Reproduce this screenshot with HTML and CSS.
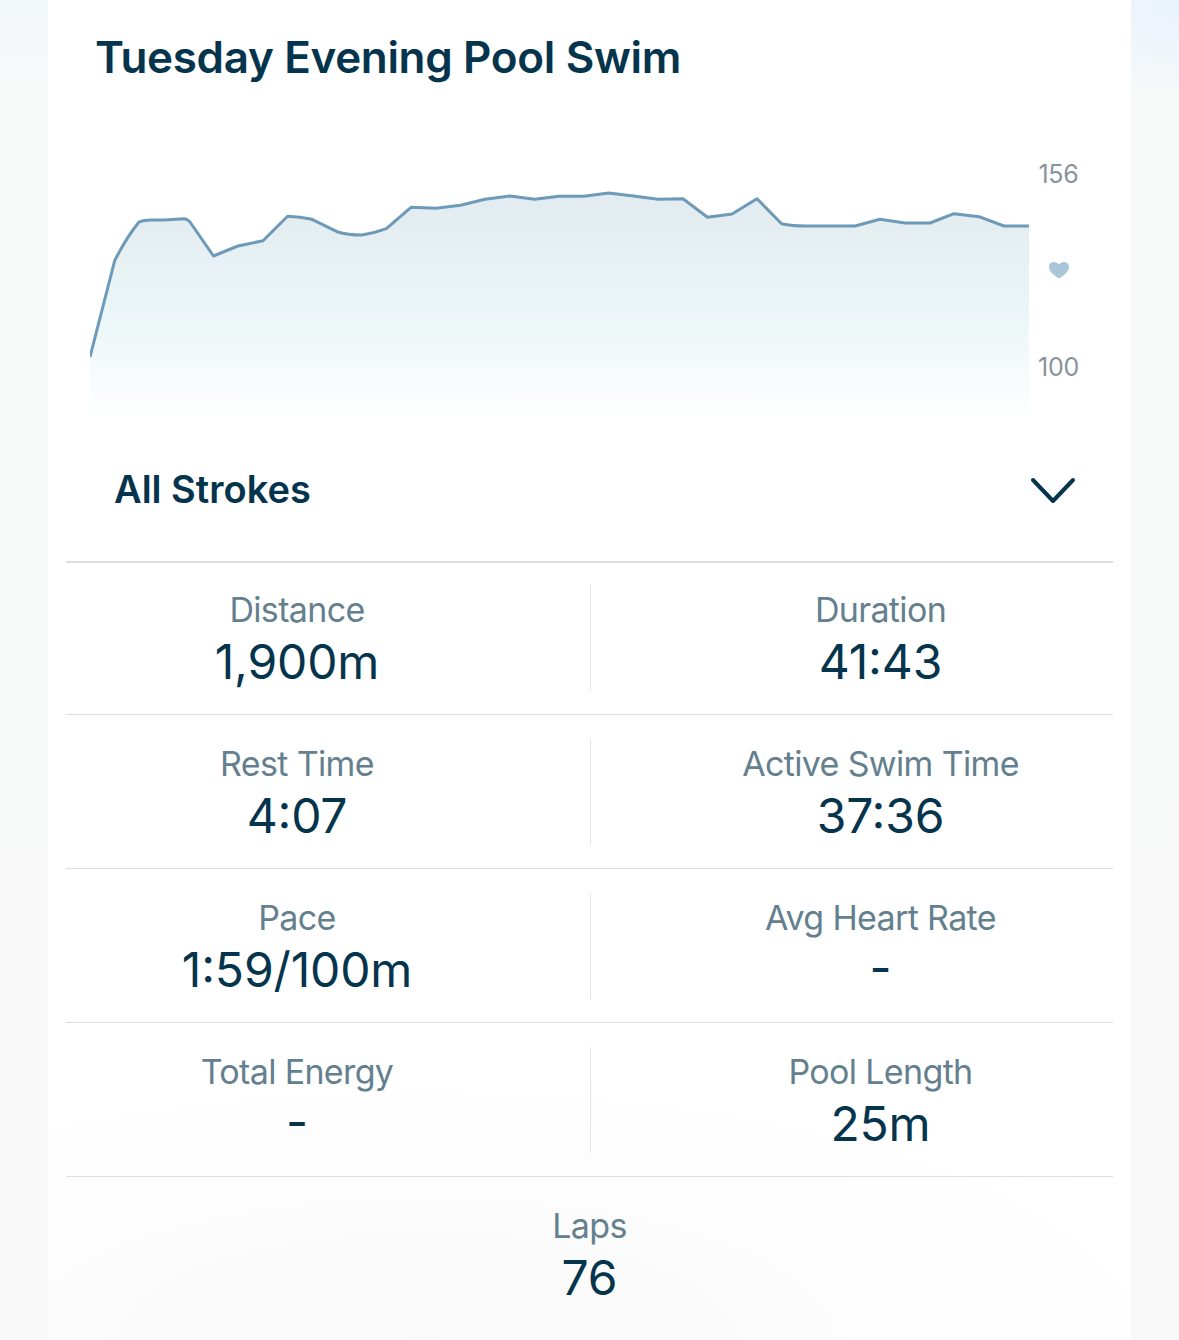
FILE: index.html
```html
<!DOCTYPE html>
<html lang="en">
<head>
<meta charset="utf-8">
<title>Tuesday Evening Pool Swim</title>
<link rel="stylesheet" href="styles.css">
</head>
<body>
<main class="card">
  <h1 class="title">Tuesday Evening Pool Swim</h1>
  <section class="chart">
    <svg class="plot" viewBox="0 0 939 270" width="939" height="270" aria-hidden="true">
      <defs>
        <linearGradient id="area" x1="0" y1="0" x2="0" y2="1">
          <stop offset="0" stop-color="#e2ebef"/>
          <stop offset="0.5" stop-color="#eaf5f7"/>
          <stop offset="0.75" stop-color="#f4fafb"/>
          <stop offset="1" stop-color="#ffffff"/>
        </linearGradient>
      </defs>
      <path class="area" d="M0 207 L24.7 110.7 Q36 88 49 72 Q52 70.500 61 70 L74 70 L94 68.700 Q97 68.700 100 72 L123.500 106 L148 96 L173 90.700 L197.600 66.300 Q210 67 222 69.300 L247 81.700 Q258 85 271.700 85 Q285 83 296.400 78.700 L321 57.300 L346 58.300 L370.500 55.300 L395 49.300 L420 46 L444.600 49.300 L469 46.300 L494 46.300 L518.700 43 L543.400 46 L568 49.300 L593 48.700 L617.500 67.300 L642 64 L667 48.700 L691.600 73.700 Q702 76 716 76 L765 76 L790 69.300 L815 73 L840 73 L864 63.700 L889 66.700 L914 76 L939 76 L939 270 L0 270 Z"/>
      <path class="line" d="M0 207 L24.700 110.700 Q36 88 49 72 Q52 70.500 61 70 L74 70 L94 68.700 Q97 68.700 100 72 L123.500 106 L148 96 L173 90.700 L197.600 66.300 Q210 67 222 69.300 L247 81.700 Q258 85 271.700 85 Q285 83 296.400 78.700 L321 57.300 L346 58.300 L370.500 55.300 L395 49.300 L420 46 L444.600 49.300 L469 46.300 L494 46.300 L518.700 43 L543.400 46 L568 49.300 L593 48.700 L617.500 67.300 L642 64 L667 48.700 L691.600 73.700 Q702 76 716 76 L765 76 L790 69.300 L815 73 L840 73 L864 63.700 L889 66.700 L914 76 L939 76"/>
    </svg>
    <div class="axis">
      <span class="tick">156</span>
      <svg class="heart" viewBox="0 1 22 18" width="22" height="18" aria-hidden="true">
        <path d="M11 17.500 C6 14 1 11 1 6 C1 2.500 3.500 1 5.700 1 C8 1 10 2 11 3.500 C12 2 14 1 16.300 1 C18.500 1 21 2.500 21 6 C21 11 16 14 11 17.500 Z"/>
      </svg>
      <span class="tick">100</span>
    </div>
  </section>
  <div class="filter">
    <span class="filter-label">All Strokes</span>
    <svg class="chevron" viewBox="0 0 46 28" width="46" height="28" aria-hidden="true">
      <path d="M3 3 L23 24 L43 3"/>
    </svg>
  </div>
  <div class="stats">
    <div class="row">
      <div class="stat stat-left"><div class="stat-body"><span class="label">Distance</span><span class="value">1,900m</span></div></div>
      <div class="stat stat-right"><div class="stat-body"><span class="label">Duration</span><span class="value">41:43</span></div></div>
    </div>
    <div class="row">
      <div class="stat stat-left"><div class="stat-body"><span class="label">Rest Time</span><span class="value">4:07</span></div></div>
      <div class="stat stat-right"><div class="stat-body"><span class="label">Active Swim Time</span><span class="value">37:36</span></div></div>
    </div>
    <div class="row">
      <div class="stat stat-left"><div class="stat-body"><span class="label">Pace</span><span class="value">1:59/100m</span></div></div>
      <div class="stat stat-right"><div class="stat-body"><span class="label">Avg Heart Rate</span><span class="value">-</span></div></div>
    </div>
    <div class="row">
      <div class="stat stat-left"><div class="stat-body"><span class="label">Total Energy</span><span class="value">-</span></div></div>
      <div class="stat stat-right"><div class="stat-body"><span class="label">Pool Length</span><span class="value">25m</span></div></div>
    </div>
    <div class="row row-single">
      <div class="stat"><div class="stat-body"><span class="label">Laps</span><span class="value">76</span></div></div>
    </div>
  </div>
</main>
</body>
</html>
```
FILE: styles.css
```css
* { box-sizing: border-box; }

html, body {
  margin: 0;
  height: 1340px;
  overflow: hidden;
}

body {
  font-family: Inter, "Liberation Sans", sans-serif;
  color: #05344d;
  background:
    radial-gradient(ellipse 130px 100px at 100% 0, #e9f2fc 0, rgba(233, 242, 252, 0) 100%),
    linear-gradient(180deg, #f3f8fa 0, #f8f9f9 110px, #f9f9f9 100%);
}

.card {
  height: 1340px;
  margin: 0 48px;
  padding: 0 18px;
  background:
    radial-gradient(ellipse 800px 280px at 35% 100%, #f9f9f9 0, #ffffff 100%);
  display: flex;
  flex-direction: column;
}

.title {
  margin: 0;
  padding: 29px 0 0 29px;
  height: 150px;
  font-size: 44px;
  line-height: 56px;
  font-weight: 600;
  letter-spacing: -0.34px;
}

.chart {
  display: flex;
  padding-left: 24px;
  height: 270px;
}

.plot { display: block; flex: none; }

.area { fill: url(#area); }

.line {
  fill: none;
  stroke: #6d9ab9;
  stroke-width: 3;
  stroke-linejoin: round;
}

.axis {
  margin-left: 9px;
  width: 41px;
  height: 233px;
  display: flex;
  flex-direction: column;
  align-items: center;
  justify-content: space-between;
  padding-top: 8px;
}

.tick {
  font-size: 25px;
  line-height: 32px;
  letter-spacing: -0.3px;
  color: #87949c;
}

.heart { display: block; fill: #a9c6d9; margin-left: 1px; }

.filter {
  height: 141px;
  padding: 0 37px 0 48px;
  display: flex;
  align-items: center;
  justify-content: space-between;
}

.filter-label {
  font-size: 38px;
  line-height: 48px;
  font-weight: 600;
  letter-spacing: 0;
  margin-bottom: 3px;
}

.chevron {
  display: block;
  fill: none;
  stroke: #05344d;
  stroke-width: 4;
  stroke-linecap: round;
  stroke-linejoin: round;
}

.stats {
  border-top: 2px solid #dddddd;
}

.row {
  display: grid;
  grid-template-columns: 524px 1fr;
  height: 154px;
  padding: 24px 0 23px;
  border-bottom: 1px solid #dedede;
}

.row:first-child {
  height: 152px;
  padding-top: 21px;
}

.row:first-child .stat-body { padding-top: 1px; }

.row-single {
  grid-template-columns: 1fr;
  border-bottom: 0;
}

.stat {
  display: flex;
  justify-content: center;
}

.stat-left { padding-right: 62px; }

.stat-right {
  padding-left: 57px;
  border-left: 1px solid #e4e4e4;
}

.stat-body {
  display: flex;
  flex-direction: column;
  align-items: center;
}

.label {
  font-size: 34px;
  line-height: 50px;
  letter-spacing: -0.65px;
  color: #64808f;
}

.value {
  font-size: 48px;
  line-height: 54px;
  letter-spacing: -0.15px;
  color: #05344d;
  font-feature-settings: "case" 1;
}
```
